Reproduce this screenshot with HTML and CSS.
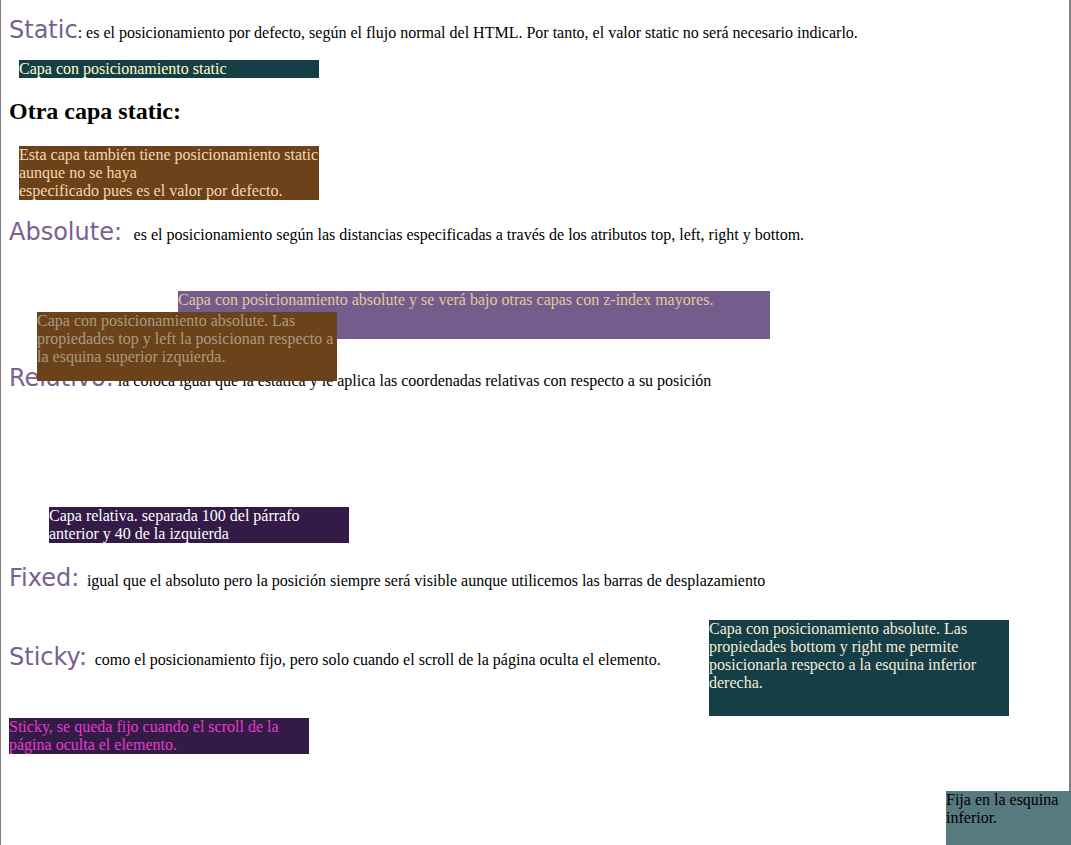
FILE: index.html
```html
<!DOCTYPE html>
<html lang="es">
<head>
<meta charset="utf-8">
<title>Posicionamiento CSS</title>
<link rel="stylesheet" href="styles.css">
</head>
<body>
<p class="intro"><span class="tit">Static</span>: es el posicionamiento por defecto, según el flujo normal del HTML. Por tanto, el valor static no será necesario indicarlo.</p>
<div class="capa capa-static">Capa con posicionamiento static</div>
<h2 class="otra">Otra capa static:</h2>
<div class="capa capa-static2">Esta capa también tiene posicionamiento static aunque no se haya<br>especificado pues es el valor por defecto.</div>

<p class="intro intro-abs"><span class="tit">Absolute: </span>&nbsp;es el posicionamiento según las distancias especificadas a través de los atributos top, left, right y bottom.</p>
<div class="zona-abs">
  <div class="capa capa-abs-bajo">Capa con posicionamiento absolute y se verá bajo otras capas con z-index mayores.</div>
  <div class="capa capa-abs-tl">Capa con posicionamiento absolute. Las propiedades top y left la posicionan respecto a la esquina superior izquierda.</div>
</div>

<p class="intro"><span class="tit">Relativo:</span> la coloca igual que la estática y le aplica las coordenadas relativas con respecto a su posición</p>
<div class="capa capa-relativa">Capa relativa. separada 100 del párrafo anterior y 40 de la izquierda</div>

<p class="intro"><span class="tit">Fixed: </span>igual que el absoluto pero la posición siempre será visible aunque utilicemos las barras de desplazamiento</p>

<p class="intro intro-sticky"><span class="tit">Sticky: </span>como el posicionamiento fijo, pero solo cuando el scroll de la página oculta el elemento.</p>
<div class="capa capa-sticky">Sticky, se queda fijo cuando el scroll de la página oculta el elemento.</div>

<div class="capa capa-abs-br">Capa con posicionamiento absolute. Las propiedades bottom y right me permite posicionarla respecto a la esquina inferior derecha.</div>
<div class="capa capa-fija">Fija en la esquina inferior.</div>
</body>
</html>
```

FILE: styles.css
```css
html {
  box-sizing: border-box;
  min-height: 100vh;
  border-left: 1px solid #808080;
  border-right: 2px solid #808080;
  background: #fff;
}

body {
  margin: 0 8px 8px 8px;
  font-family: "Liberation Serif", "Times New Roman", serif;
  font-size: 16px;
  color: #000;
}

.intro {
  margin: 16px 0;
}

.intro-abs {
  margin-top: 18px;
}

.tit {
  font-family: "DejaVu Sans", Verdana, sans-serif;
  font-size: 24px;
  color: #77618f;
}

.otra {
  font-size: 24px;
  font-weight: bold;
  margin: 20px 0 21px;
}

.capa {
  width: 300px;
}

.capa-static {
  margin-left: 10px;
  background: #163e46;
  color: #ffffc8;
}

.capa-static2 {
  margin-left: 10px;
  background: #6b4219;
  color: #f6d8ac;
}

.zona-abs {
  position: relative;
  height: 86px;
}

.capa-abs-bajo {
  position: absolute;
  top: 29px;
  left: 169px;
  width: 592px;
  height: 48px;
  background: #745c8c;
  color: #e2ca9c;
  z-index: 1;
}

.capa-abs-tl {
  position: absolute;
  top: 50px;
  left: 28px;
  height: 69px;
  background: #6b4219;
  color: #aa9a80;
  z-index: 2;
}

.capa-relativa {
  margin: 115px 0 21px 40px;
  background: #331a47;
  color: #fff;
}

.intro-sticky {
  margin-top: 51px;
  margin-bottom: 47px;
}

.capa-sticky {
  position: sticky;
  top: 0;
  background: #331a47;
  color: #e23ec8;
}

.capa-abs-br {
  position: absolute;
  right: 62px;
  bottom: 129px;
  height: 96px;
  background: #163e46;
  color: #f4ecdc;
}

.capa-fija {
  position: fixed;
  right: 0;
  bottom: 0;
  width: 125px;
  height: 54px;
  background: #567a7e;
  color: #000;
}
```
